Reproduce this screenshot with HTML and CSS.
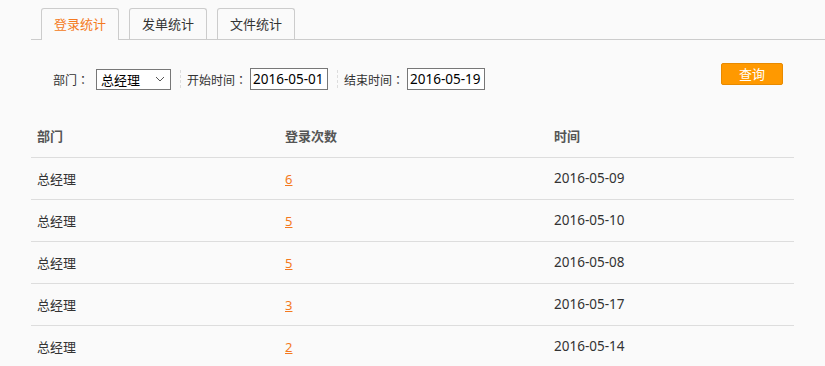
FILE: index.html
```html
<!DOCTYPE html>
<html lang="zh-CN">
<head>
  <meta charset="UTF-8" />
  <title>登录统计</title>
  <link rel="stylesheet" href="styles.css">
</head>
<body>
  <div class="main">
    <ul class="tabs">
      <li class="tab active">登录统计</li>
      <li class="tab">发单统计</li>
      <li class="tab">文件统计</li>
    </ul>

    <div class="filter">
      <label class="field-label">部门<span class="colon" lang="zh-TW">：</span></label>
      <div class="select">
        <span>总经理</span>
        <svg width="10" height="6" viewBox="0 0 10 6"><path d="M1 1l4 4 4-4" fill="none" stroke="#555" stroke-width="1"/></svg>
      </div>
      <span class="sep"></span>
      <label class="field-label">开始时间<span class="colon" lang="zh-TW">：</span></label>
      <input class="date" type="text" value="2016-05-01">
      <span class="sep"></span>
      <label class="field-label">结束时间<span class="colon" lang="zh-TW">：</span></label>
      <input class="date" type="text" value="2016-05-19">
      <button class="button">查询</button>
    </div>

    <table class="stats">
      <thead>
        <tr><th class="c1">部门</th><th class="c2">登录次数</th><th class="c3">时间</th></tr>
      </thead>
      <tbody>
        <tr><td>总经理</td><td><a href="#">6</a></td><td>2016-05-09</td></tr>
        <tr><td>总经理</td><td><a href="#">5</a></td><td>2016-05-10</td></tr>
        <tr><td>总经理</td><td><a href="#">5</a></td><td>2016-05-08</td></tr>
        <tr><td>总经理</td><td><a href="#">3</a></td><td>2016-05-17</td></tr>
        <tr><td>总经理</td><td><a href="#">2</a></td><td>2016-05-14</td></tr>
      </tbody>
    </table>
  </div>
</body>
</html>
```

FILE: styles.css
```css
/* GLOBAL */
* {
  box-sizing: border-box;
  margin: 0;
  padding: 0;
}
body {
  font-family: "Noto Sans CJK SC", "Noto Sans", sans-serif;
  font-size: 13px;
  color: #333;
  background-color: #fafafa;
}

.main {
  margin-left: 31px;
}

/* TABS */
.tabs {
  list-style: none;
  display: flex;
  gap: 10px;
  padding: 8px 0 0 10px;
  border-bottom: 1px solid #ccc;
}
.tab {
  width: 78px;
  height: 31px;
  line-height: 29px;
  text-align: center;
  border: 1px solid #ccc;
  border-bottom: none;
  border-radius: 3px 3px 0 0;
  background-color: #fafafa;
  color: #333;
}
.tab.active {
  color: #f47920;
  height: 32px;
  margin-bottom: -1px;
}

/* FILTER ROW */
.filter {
  display: flex;
  align-items: center;
  height: 22px;
  margin-top: 28px;
  padding-left: 22px;
  width: 763px;
}
.field-label {
  font-size: 12px;
  color: #333;
  margin-right: 3px;
}
.colon {
  font-family: "Noto Sans CJK TC", sans-serif;
}
.select {
  display: flex;
  align-items: center;
  justify-content: space-between;
  width: 75px;
  height: 21px;
  margin-left: 4px;
  padding: 0 5px 0 4px;
  border: 1px solid #777;
  background-color: #fff;
  color: #000;
}
.sep {
  width: 0;
  height: 18px;
  margin: 0 6px 0 9px;
  border-left: 1px dashed #ddd;
}
.date {
  width: 78px;
  height: 22px;
  padding: 0 2px;
  border: 1px solid #777;
  background-color: #fff;
  font-family: "Noto Sans", "Liberation Sans", sans-serif;
  font-size: 13.5px;
  color: #000;
}
.button {
  margin-left: auto;
  margin-right: 11px;
  margin-top: -11px;
  width: 62px;
  height: 22px;
  border: 1px solid #e88a00;
  border-radius: 2px;
  background-color: #ff9900;
  color: #fff;
  font-family: inherit;
  font-size: 13px;
  cursor: pointer;
}

/* TABLE */
.stats {
  margin-top: 24px;
  width: 763px;
  border-collapse: collapse;
}
.stats th,
.stats td {
  height: 42px;
  padding: 0 0 0 6px;
  text-align: left;
  border-bottom: 1px solid #ddd;
}
.stats th {
  font-weight: bold;
  color: #555;
  height: 43px;
}
.stats td:nth-child(3) {
  font-family: "Noto Sans", "Liberation Sans", sans-serif;
  font-size: 13.5px;
}
.c1 { width: 248px; }
.c2 { width: 269px; }
.stats tbody tr:last-child td {
  border-bottom: none;
}
.stats a {
  color: #f47920;
  font-family: "Noto Sans", "Liberation Sans", sans-serif;
}
```
